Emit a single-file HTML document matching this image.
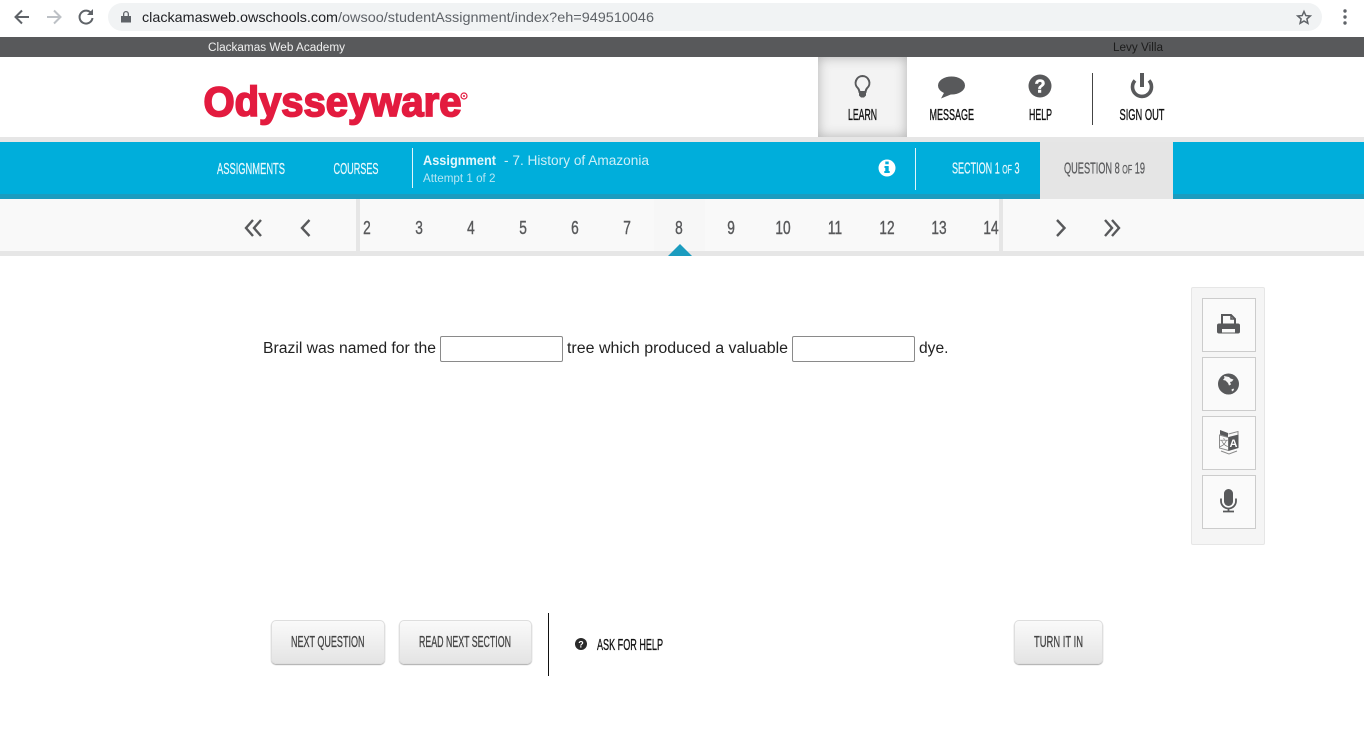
<!DOCTYPE html>
<html><head><meta charset="utf-8"><title>Odysseyware</title>
<style>
html,body{margin:0;padding:0;width:1364px;height:733px;overflow:hidden;background:#fff}
div,input{position:absolute;box-sizing:border-box}
svg{position:absolute;left:0;top:0}
text{font-family:"Liberation Sans",sans-serif}
.b{background:linear-gradient(#fafafa,#e4e4e4);border:1px solid #dedede;border-radius:5px;box-shadow:0 1px 1px #aaa}
.t{background:#fafafa;border:1px solid #ccc;left:1202px;width:54px;height:54px}
input{background:#fff;border:1px solid #8a8a8a;border-radius:2px;top:336px;height:26px;width:123px;padding:0}
</style></head><body>
<div style="left:0;top:0;width:1364px;height:37px;background:#fff"></div>
<div style="left:108px;top:3px;width:1214px;height:28px;background:#f1f3f4;border-radius:14px"></div>
<div style="left:0;top:37px;width:1364px;height:20px;background:#58595b"></div>
<div style="left:818px;top:57px;width:89px;height:80px;background:#f3f3f3;box-shadow:inset 0 0 12px #b0b0b0"></div>
<div style="left:0;top:137px;width:1364px;height:5px;background:#e6e6e6"></div>
<div style="left:0;top:142px;width:1364px;height:52px;background:#00aedb"></div>
<div style="left:0;top:194px;width:1364px;height:5px;background:#1b9cbf"></div>
<div style="left:1040px;top:142px;width:133px;height:57px;background:#e5e5e5"></div>
<div style="left:0;top:199px;width:1364px;height:52px;background:#f9f9f9"></div>
<div style="left:0;top:251px;width:1364px;height:5px;background:#e6e6e6"></div>
<div style="left:356px;top:199px;width:4px;height:52px;background:#e6e6e6"></div>
<div style="left:999px;top:199px;width:4px;height:52px;background:#e6e6e6"></div>
<div style="left:654px;top:199px;width:51px;height:52px;background:#f7f7f7"></div>
<div style="left:1191px;top:287px;width:74px;height:258px;background:#f5f5f5;border:1px solid #e6e6e6;border-radius:2px"></div>
<div class="t" style="top:298px"></div><div class="t" style="top:357px"></div><div class="t" style="top:416px"></div><div class="t" style="top:475px"></div>
<input type="text" style="left:440px"><input type="text" style="left:792px">
<div class="b" style="left:271px;top:620px;width:114px;height:44px"></div>
<div class="b" style="left:399px;top:620px;width:133px;height:44px"></div>
<div class="b" style="left:1014px;top:620px;width:89px;height:44px"></div>
<div style="left:548px;top:613px;width:1px;height:63px;background:#111"></div>

<svg width="1364" height="733" viewBox="0 0 1364 733" xmlns="http://www.w3.org/2000/svg">
<!-- browser -->
<g fill="none" stroke="#5f6368" stroke-width="2">
<path d="M29 17H16M22 10.500L15.500 17L22 23.500"/>
<path stroke="#bdc1c6" d="M47 17H60M54 10.500L60.500 17L54 23.500"/>
<path d="M91.500 13.500A6.500 6.500 0 1 0 92.500 18"/>
</g>
<path d="M93 9V15H87Z" fill="#5f6368"/>
<path d="M121 16h10v6.500h-10zM123 16v-2a3 3 0 0 1 6 0v2h-1.300v-2a1.700 1.700 0 0 0-3.400 0v2z" fill="#5f6368"/>
<text x="142" y="22" font-size="14" fill="#202124" textLength="196" lengthAdjust="spacingAndGlyphs">clackamasweb.owschools.com</text>
<text x="338" y="22" font-size="14" fill="#5f6368" textLength="316" lengthAdjust="spacingAndGlyphs">/owsoo/studentAssignment/index?eh=949510046</text>
<path d="M1304 11.500l1.800 4.100 4.500.4-3.400 2.900 1 4.400-3.900-2.300-3.900 2.300 1-4.400-3.400-2.900 4.500-.4z" fill="none" stroke="#5f6368" stroke-width="1.500"/>
<g fill="#5f6368"><circle cx="1345" cy="11" r="1.700"/><circle cx="1345" cy="17" r="1.700"/><circle cx="1345" cy="23" r="1.700"/></g>
<!-- top bar -->
<text x="208" y="51" font-size="11.500" fill="#f0f0f0" textLength="137" lengthAdjust="spacingAndGlyphs">Clackamas Web Academy</text>
<text x="1113" y="51" font-size="11.500" fill="#1c1c1c" textLength="50" lengthAdjust="spacingAndGlyphs">Levy Villa</text>
<!-- logo -->
<text x="203.500" y="116" font-size="42" font-weight="700" fill="#e31b3f" stroke="#e31b3f" stroke-width="1.800" textLength="258" lengthAdjust="spacingAndGlyphs">Odysseyware</text>
<circle cx="464" cy="96" r="3" fill="none" stroke="#e31b3f" stroke-width="1.200"/>
<circle cx="464" cy="96" r="1" fill="#e31b3f"/>
<!-- header nav icons -->
<path d="M862.500 76a7 7 0 0 0-4.500 12.300c1 1 1.300 2.400 1.500 3.700h6c.2-1.300.5-2.700 1.500-3.700A7 7 0 0 0 862.500 76z" fill="none" stroke="#58595b" stroke-width="2"/>
<path d="M859 92h7v3.500l-2 2h-3l-2-2z" fill="#58595b"/>
<ellipse cx="951.500" cy="85.500" rx="13.500" ry="9" fill="#58595b"/>
<path d="M945 91L941 98.500L952 94Z" fill="#58595b"/>
<circle cx="1040" cy="86" r="11.500" fill="#58595b"/>
<text x="1040" y="92.500" font-size="18" font-weight="700" fill="#fff" stroke="#fff" stroke-width=".6" text-anchor="middle">?</text>
<path d="M1135 80.500A9.500 9.500 0 1 0 1149 80.500" fill="none" stroke="#58595b" stroke-width="3.600"/>
<path d="M1142 73V87" stroke="#58595b" stroke-width="4" fill="none"/>
<path d="M1092.500 73V125" stroke="#444" stroke-width="1" fill="none"/>
<g font-size="15.500" fill="#111" stroke="#111" stroke-width=".35">
<text x="848" y="120" textLength="29" lengthAdjust="spacingAndGlyphs">LEARN</text>
<text x="929.500" y="120" textLength="44.500" lengthAdjust="spacingAndGlyphs">MESSAGE</text>
<text x="1029" y="120" textLength="23" lengthAdjust="spacingAndGlyphs">HELP</text>
<text x="1119.500" y="120" textLength="45" lengthAdjust="spacingAndGlyphs">SIGN OUT</text>
</g>
<!-- blue bar -->
<g font-size="15.500" fill="#e8f8fd" stroke="#e8f8fd" stroke-width=".25">
<text x="217" y="174" textLength="68" lengthAdjust="spacingAndGlyphs">ASSIGNMENTS</text>
<text x="333.500" y="174" textLength="45" lengthAdjust="spacingAndGlyphs">COURSES</text>
<text x="952" y="173.500" textLength="67.500" lengthAdjust="spacingAndGlyphs">SECTION 1 <tspan font-size="12">OF</tspan> 3</text>
</g>
<path d="M412.500 148V188M915.500 148V190" stroke="#dff5fb" stroke-width="1" fill="none"/>
<text x="423" y="165" font-size="13.500" font-weight="700" fill="#e4f7fc" textLength="73" lengthAdjust="spacingAndGlyphs">Assignment</text>
<text x="504" y="165" font-size="13.500" fill="#cdeff8" textLength="145" lengthAdjust="spacingAndGlyphs">- 7. History of Amazonia</text>
<text x="423" y="182" font-size="11.500" fill="#b5e6f4" textLength="72.500" lengthAdjust="spacingAndGlyphs">Attempt 1 of 2</text>
<circle cx="887" cy="168" r="8.500" fill="#fff"/>
<path d="M885.300 161.500h3.400v2.800h-3.400zM884.500 166h4.200v5h1v2h-5.400v-2h1v-3h-.8z" fill="#00aedb"/>
<text x="1064" y="173.500" font-size="15.500" fill="#58595b" stroke="#58595b" stroke-width=".25" textLength="81" lengthAdjust="spacingAndGlyphs">QUESTION 8 <tspan font-size="12">OF</tspan> 19</text>
<!-- pager -->
<g font-size="18.500" fill="#58595b" stroke="#58595b" stroke-width=".4" text-anchor="middle">
<text x="367" y="234" transform="translate(367 0) scale(.74 1) translate(-367 0)">2</text>
<text x="419" y="234" transform="translate(419 0) scale(.74 1) translate(-419 0)">3</text>
<text x="471" y="234" transform="translate(471 0) scale(.74 1) translate(-471 0)">4</text>
<text x="523" y="234" transform="translate(523 0) scale(.74 1) translate(-523 0)">5</text>
<text x="575" y="234" transform="translate(575 0) scale(.74 1) translate(-575 0)">6</text>
<text x="627" y="234" transform="translate(627 0) scale(.74 1) translate(-627 0)">7</text>
<text x="679" y="234" transform="translate(679 0) scale(.74 1) translate(-679 0)">8</text>
<text x="731" y="234" transform="translate(731 0) scale(.74 1) translate(-731 0)">9</text>
<text x="783" y="234" transform="translate(783 0) scale(.74 1) translate(-783 0)">10</text>
<text x="835" y="234" transform="translate(835 0) scale(.74 1) translate(-835 0)">11</text>
<text x="887" y="234" transform="translate(887 0) scale(.74 1) translate(-887 0)">12</text>
<text x="939" y="234" transform="translate(939 0) scale(.74 1) translate(-939 0)">13</text>
<text x="991" y="234" transform="translate(991 0) scale(.74 1) translate(-991 0)">14</text>
</g>
<g fill="none" stroke="#58595b" stroke-width="2.400">
<path d="M253 220L246 228L253 236M261 220L254 228L261 236"/>
<path d="M309.500 220L302 228L309.500 236"/>
<path d="M1057 220L1064.500 228L1057 236"/>
<path d="M1105 220L1112 228L1105 236M1112 220L1119 228L1112 236"/>
</g>
<path d="M668 256L680 244L692 256Z" fill="#1b9cbf"/>
<!-- question -->
<g font-size="15.500" fill="#222">
<text x="263" y="353" textLength="173" lengthAdjust="spacingAndGlyphs">Brazil was named for the</text>
<text x="567" y="353" textLength="221" lengthAdjust="spacingAndGlyphs">tree which produced a valuable</text>
<text x="919" y="353" textLength="29.500" lengthAdjust="spacingAndGlyphs">dye.</text>
</g>
<!-- print -->
<path d="M1222 325V315h9l4 4v6" fill="#fafafa" stroke="#58595b" stroke-width="2"/>
<path d="M1231 315v4h4" fill="none" stroke="#58595b" stroke-width="1.500"/>
<path d="M1219 323.500h19a2 2 0 0 1 2 2v6a2 2 0 0 1-2 2h-19a2 2 0 0 1-2-2v-6a2 2 0 0 1 2-2z" fill="#58595b"/>
<rect x="1222" y="329" width="13" height="3.500" fill="#fafafa"/>
<!-- globe -->
<circle cx="1228.500" cy="384" r="10.500" fill="#58595b"/>
<path d="M1224 376l5 1 1.500 1.500 3 1-1.500 2-2 .5 1 2.500-2 1-1-2.500-2.500-2.500-2.500-.5 1.500-2z" fill="#f5f5f5"/>
<path d="M1231.500 389.500l2-1 .5 1.500-2 1.500z" fill="#f5f5f5"/>
<!-- translate -->
<path d="M1219.500 435l9 2.500v13l-9-2.500z" fill="#fafafa" stroke="#8a8a8a" stroke-width="1"/>
<path d="M1220 430l8 3v4l-8-2.500z" fill="#58595b"/>
<path d="M1228.500 434l9.500-2.500v3" fill="none" stroke="#8a8a8a" stroke-width="1"/>
<path d="M1228.500 437l10-2.500v13.500l-10 3z" fill="#58595b"/>
<text x="1233.500" y="447" font-size="11" font-weight="700" fill="#fff" text-anchor="middle">A</text>
<text x="1224" y="446" font-size="9" fill="#777" text-anchor="middle">文</text>
<path d="M1221 451l8 3 8-3" fill="none" stroke="#8a8a8a" stroke-width="1"/>
<!-- mic -->
<rect x="1224" y="489" width="9" height="17" rx="4.500" fill="#58595b"/>
<path d="M1221 498.500v2.500a7.500 7.500 0 0 0 15 0v-2.500" fill="none" stroke="#58595b" stroke-width="1.800"/>
<path d="M1228.500 508v3.500M1223 511.500h11" fill="none" stroke="#58595b" stroke-width="1.800"/>
<!-- buttons -->
<g font-size="15.500" fill="#444" stroke="#444" stroke-width=".3">
<text x="291" y="647" textLength="73.500" lengthAdjust="spacingAndGlyphs">NEXT QUESTION</text>
<text x="419" y="647" textLength="92" lengthAdjust="spacingAndGlyphs">READ NEXT SECTION</text>
<text x="1034" y="647" textLength="49" lengthAdjust="spacingAndGlyphs">TURN IT IN</text>
</g>
<circle cx="581" cy="644" r="6" fill="#2a2a2a"/>
<text x="581" y="647.500" font-size="9" font-weight="700" fill="#fff" text-anchor="middle">?</text>
<text x="597" y="650" font-size="15.500" fill="#111" stroke="#111" stroke-width=".3" textLength="66" lengthAdjust="spacingAndGlyphs">ASK FOR HELP</text>
</svg>
</body></html>
